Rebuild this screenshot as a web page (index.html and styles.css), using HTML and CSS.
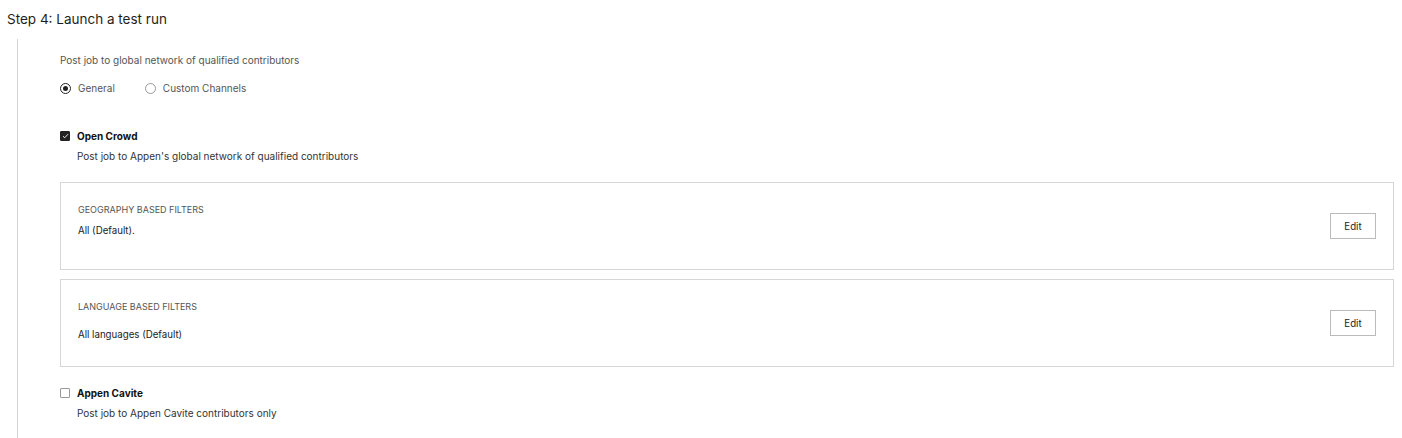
FILE: index.html
```html
<!DOCTYPE html>
<html>
<head>
<meta charset="utf-8">
<link rel="stylesheet" href="styles.css">
</head>
<body>
<div class="page">
  <h2 class="step-title">Step 4: Launch a test run</h2>
  <div class="section">
    <p class="intro">Post job to global network of qualified contributors</p>
    <div class="radios">
      <label class="radio"><span class="radio-dot checked"></span>General</label>
      <label class="radio"><span class="radio-dot"></span>Custom Channels</label>
    </div>

    <div class="option">
      <div class="option-head">
        <span class="check checked"><svg width="7" height="6" viewBox="0 0 7 6"><path d="M1 3.2 L2.7 4.8 L6 1.2" fill="none" stroke="#fff" stroke-width="0.9"/></svg></span>
        <span class="option-name">Open Crowd</span>
      </div>
      <p class="option-desc">Post job to Appen's global network of qualified contributors</p>
    </div>

    <div class="filter-box">
      <div class="filter-text">
        <div class="filter-title">GEOGRAPHY BASED FILTERS</div>
        <div class="filter-value">All (Default).</div>
      </div>
      <button class="edit-btn">Edit</button>
    </div>

    <div class="filter-box lang">
      <div class="filter-text">
        <div class="filter-title">LANGUAGE BASED FILTERS</div>
        <div class="filter-value">All languages (Default)</div>
      </div>
      <button class="edit-btn">Edit</button>
    </div>

    <div class="option last">
      <div class="option-head">
        <span class="check"></span>
        <span class="option-name">Appen Cavite</span>
      </div>
      <p class="option-desc">Post job to Appen Cavite contributors only</p>
    </div>
  </div>
</div>
</body>
</html>
```

FILE: styles.css
```css
* { box-sizing: border-box; }
html, body { margin: 0; padding: 0; background: #fff; }
body {
  font-family: Inter, "Noto Sans", Arial, sans-serif;
  color: #222;
  width: 1402px;
  height: 438px;
  overflow: hidden;
}
.page {
  padding: 11px 8px 0 7px;
}
.step-title {
  margin: 0;
  font-size: 13.5px;
  font-weight: 400;
  line-height: 16px;
  color: #1e1e1e;
}
.section {
  margin-top: 12px;
  margin-left: 10px;
  border-left: 1px solid #d4d4d4;
  padding: 14px 0 0 42px;
  height: 399px;
}
.intro {
  margin: 0;
  font-size: 10px;
  line-height: 14px;
  color: #555;
}
.radios {
  display: flex;
  gap: 30px;
  margin-top: 14px;
  font-size: 10px;
  color: #555;
}
.radio {
  display: flex;
  align-items: center;
  gap: 7px;
  line-height: 14px;
}
.radio-dot {
  width: 11px;
  height: 11px;
  border-radius: 50%;
  border: 1px solid #999;
  display: inline-block;
  position: relative;
}
.radio-dot.checked {
  border-color: #222;
}
.radio-dot.checked::after {
  content: "";
  position: absolute;
  left: 2px;
  top: 2px;
  width: 5px;
  height: 5px;
  border-radius: 50%;
  background: #222;
}
.option {
  margin-top: 34px;
}
.option-head {
  display: flex;
  align-items: center;
  gap: 7px;
}
.check {
  width: 10px;
  height: 10px;
  border: 1px solid #999;
  border-radius: 1px;
  display: flex;
  align-items: center;
  justify-content: center;
}
.check.checked {
  background: #222;
  border-color: #222;
}
.option-name {
  font-size: 10px;
  font-weight: 700;
  color: #111;
  line-height: 14px;
}
.option-desc {
  margin: 6px 0 0 17px;
  font-size: 10px;
  line-height: 14px;
  color: #333;
}
.filter-box {
  margin-top: 19px;
  border: 1px solid #d6d6d6;
  height: 88px;
  display: flex;
  align-items: center;
  justify-content: space-between;
  padding: 0 17px 0 17px;
}
.filter-box.lang {
  margin-top: 9px;
}
.filter-text {
  display: flex;
  flex-direction: column;
  gap: 8px;
  margin-top: -11px;
}
.filter-box.lang .filter-text { gap: 15px; margin-top: -5px; }
.filter-title {
  font-size: 9px;
  color: #555;
  line-height: 13px;
}
.filter-value {
  font-size: 9.7px;
  color: #222;
  line-height: 14px;
}
.edit-btn {
  width: 46px;
  height: 26px;
  border: 1px solid #bbb;
  background: #fff;
  font-family: inherit;
  font-size: 9.7px;
  color: #222;
  padding: 0;
  border-radius: 0;
}
.option.last {
  margin-top: 19px;
}
```
